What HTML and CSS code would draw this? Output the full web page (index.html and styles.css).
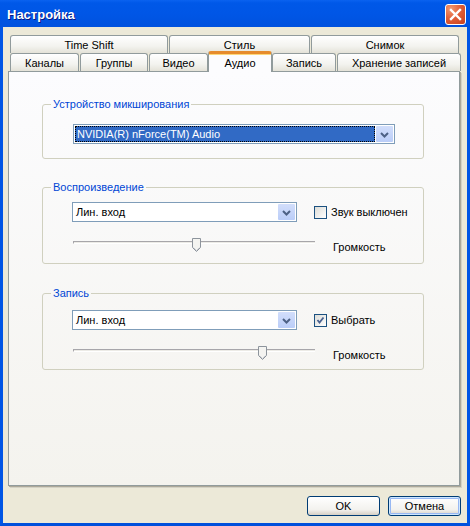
FILE: index.html
```html
<!DOCTYPE html>
<html lang="ru">

<head>
    <meta charset="UTF-8">
    <title>Настройка</title>
    <link rel="stylesheet" href="styles.css">
</head>

<body>
    <div class="window">
        <div class="titlebar">
            <span class="title">Настройка</span>
            <div class="close">
                <svg width="19" height="19" viewBox="0 0 19 19">
                    <path d="M5 5 L14 14 M14 5 L5 14" stroke="#fff" stroke-width="2.4" stroke-linecap="square" />
                </svg>
            </div>
        </div>

        <div class="client">
            <div class="tabs">
                <div class="tabrow">
                    <div class="tab" style="width: 158px">Time Shift</div>
                    <div class="tab" style="width: 141px">Стиль</div>
                    <div class="tab" style="width: 148px">Снимок</div>
                </div>
                <div class="tabrow front">
                    <div class="tab" style="width: 69px">Каналы</div>
                    <div class="tab" style="width: 68px">Группы</div>
                    <div class="tab" style="width: 59px">Видео</div>
                    <div class="tab active" style="width: 64px">Аудио</div>
                    <div class="tab" style="width: 64px">Запись</div>
                    <div class="tab" style="width: 124px">Хранение записей</div>
                </div>
            </div>

            <div class="pane">
                <fieldset class="group group-mixer">
                    <legend>Устройство микширования</legend>
                    <div class="combo wide">
                        <div class="combo-value selected"><span>NVIDIA(R) nForce(TM) Audio</span></div>
                        <div class="combo-btn">
                            <svg width="17" height="17" viewBox="0 0 17 17">
                                <path d="M5 7 L8.5 10.5 L12 7" fill="none" stroke="#4d6185" stroke-width="2" />
                            </svg>
                        </div>
                    </div>
                </fieldset>

                <fieldset class="group group-play">
                    <legend>Воспроизведение</legend>
                    <div class="row">
                        <div class="combo">
                            <div class="combo-value">Лин. вход</div>
                            <div class="combo-btn">
                                <svg width="17" height="17" viewBox="0 0 17 17">
                                    <path d="M5 7 L8.5 10.5 L12 7" fill="none" stroke="#4d6185" stroke-width="2" />
                                </svg>
                            </div>
                        </div>
                        <label class="check">
                            <span class="box"></span>
                            Звук выключен
                        </label>
                    </div>
                    <div class="row slider-row">
                        <div class="slider">
                            <div class="track"></div>
                            <div class="thumb" style="left: 119px">
                                <svg width="9" height="14" viewBox="0 0 9 14">
                                    <path d="M0.5 0.5 H8.5 V9.5 L4.5 13.5 L0.5 9.5 Z" fill="#f4f4f1" stroke="#8d949c" />
                                    <path d="M1.5 9.5 L4.5 12.5 L7.5 9.5" fill="none" stroke="#c9ccd1" />
                                </svg>
                            </div>
                        </div>
                        <span class="slider-label">Громкость</span>
                    </div>
                </fieldset>

                <fieldset class="group group-rec">
                    <legend>Запись</legend>
                    <div class="row">
                        <div class="combo">
                            <div class="combo-value">Лин. вход</div>
                            <div class="combo-btn">
                                <svg width="17" height="17" viewBox="0 0 17 17">
                                    <path d="M5 7 L8.5 10.5 L12 7" fill="none" stroke="#4d6185" stroke-width="2" />
                                </svg>
                            </div>
                        </div>
                        <label class="check">
                            <span class="box">
                                <svg width="11" height="11" viewBox="0 0 11 11">
                                    <path d="M2.5 5 L4.5 7.5 L8.5 2.5" fill="none" stroke="#4a6290" stroke-width="1.8" />
                                </svg>
                            </span>
                            Выбрать
                        </label>
                    </div>
                    <div class="row slider-row">
                        <div class="slider">
                            <div class="track"></div>
                            <div class="thumb" style="left: 185px">
                                <svg width="9" height="14" viewBox="0 0 9 14">
                                    <path d="M0.5 0.5 H8.5 V9.5 L4.5 13.5 L0.5 9.5 Z" fill="#f4f4f1" stroke="#8d949c" />
                                    <path d="M1.5 9.5 L4.5 12.5 L7.5 9.5" fill="none" stroke="#c9ccd1" />
                                </svg>
                            </div>
                        </div>
                        <span class="slider-label">Громкость</span>
                    </div>
                </fieldset>
            </div>

            <div class="buttons">
                <button class="btn">OK</button>
                <button class="btn default">Отмена</button>
            </div>
        </div>
    </div>
</body>

</html>
```

FILE: styles.css
```css
* {
    box-sizing: border-box;
}

body {
    margin: 0;
    font-family: "Liberation Sans", Arial, sans-serif;
    font-size: 11px;
    color: #000;
    background-color: #ece9d8;
}

.window {
    width: 470px;
    height: 526px;
    display: flex;
    flex-direction: column;
    background-color: #0054e3;
    border-left: 3px solid #0055e5;
    border-right: 3px solid #0055e5;
    border-bottom: 3px solid #0050dc;
}

.titlebar {
    height: 27px;
    margin: 0 -3px;
    padding: 0 4px 0 7px;
    display: flex;
    align-items: center;
    justify-content: space-between;
    background: linear-gradient(#0a62f0 0, #0058e8 3px, #0056e6 50%, #0052de 100%);
}

.title {
    color: #fff;
    font-size: 13px;
    font-weight: bold;
    text-shadow: 1px 1px 0 #0a1883;
    padding-top: 2px;
}

.close {
    width: 21px;
    height: 21px;
    margin-top: 1px;
    border: 1px solid #fff;
    border-radius: 3px;
    display: flex;
    align-items: center;
    justify-content: center;
    background: radial-gradient(circle at 25% 20%, #f29a72 0, #e2603a 45%, #c7401d 100%);
}

.client {
    flex: 1;
    display: flex;
    flex-direction: column;
    background-color: #ece9d8;
    padding: 8px 0 0 5px;
}

/* tabs */
.tabs {
    padding-left: 2px;
}

.tabrow {
    display: flex;
    height: 18px;
    gap: 1px;
}

.tabrow.front {
    align-items: flex-end;
}

.tab {
    height: 18px;
    flex-shrink: 0;
    display: flex;
    align-items: center;
    justify-content: center;
    border: 1px solid #919b9c;
    border-bottom: none;
    border-radius: 3px 3px 0 0;
    background: linear-gradient(#ffffff, #f3f3ef 60%, #e4e2d8);
    padding-top: 1px;
}

.tab.active {
    height: 21px;
    margin-bottom: -1px;
    margin-left: -1px;
    margin-right: -1px;
    position: relative;
    z-index: 1;
    background: #fcfcfe;
    border-top: 3px solid #e68b2c;
    box-shadow: inset 0 1px 0 #fdd77a;
    padding-bottom: 2px;
}

.pane {
    width: 452px;
    height: 415px;
    border: 1px solid #919b9c;
    background: linear-gradient(#fcfcfe, #f4f3ee);
    box-shadow: 1px 1px 0 #aca899, 2px 2px 0 #d4d2c5;
    padding: 25px 0 0 33px;
}

/* group boxes */
.group {
    width: 382px;
    margin: 0;
    border: 1px solid #d0d0bf;
    border-radius: 3px;
    padding: 0 0 0 29px;
    min-width: 0;
}

.group legend {
    color: #0046d5;
    line-height: 14px;
    padding: 0 2px;
    margin-left: -21px;
}

.group-mixer {
    padding-top: 13px;
    padding-bottom: 14px;
}

.group-play {
    margin-top: 21px;
    padding-top: 8px;
    padding-bottom: 10px;
}

.group-rec {
    margin-top: 22px;
    padding-top: 10px;
    padding-bottom: 8px;
}

.row {
    display: flex;
    align-items: center;
}

.slider-row {
    margin-top: 13px;
    height: 18px;
    align-items: flex-start;
}

/* combo box */
.combo {
    width: 225px;
    height: 20px;
    border: 1px solid #7f9db9;
    background-color: #fff;
    display: flex;
    align-items: center;
    padding: 1px;
}

.combo.wide {
    width: 322px;
    margin-left: 1px;
}

.combo-value {
    flex: 1;
    padding-left: 2px;
    line-height: 16px;
}

.combo-value.selected {
    height: 16px;
    margin-right: 1px;
    padding: 0;
    background-color: #316ac5;
    color: #fff;
    outline: 1px dotted #000;
    outline-offset: -1px;
    display: flex;
    align-items: center;
}

.combo-value.selected span {
    padding-left: 2px;
}

.combo-btn {
    width: 17px;
    height: 16px;
    border-radius: 1px;
    background: linear-gradient(#d2defb, #bacdf8);
    display: flex;
    align-items: center;
    justify-content: center;
}

/* checkbox */
.check {
    display: flex;
    align-items: center;
    gap: 4px;
    margin-left: 17px;
}

.box {
    width: 13px;
    height: 13px;
    border: 1px solid #1c5180;
    background: linear-gradient(135deg, #dcdcd7, #ffffff);
    display: flex;
    align-items: center;
    justify-content: center;
}

/* slider */
.slider {
    width: 242px;
    height: 18px;
    margin-left: 1px;
    position: relative;
}

.track {
    margin-top: 6px;
    height: 3px;
    border-top: 1px solid #a7a6aa;
    border-bottom: 1px solid #ffffff;
    border-left: 1px solid #a7a6aa;
    background-color: #ecebe6;
}

.thumb {
    position: absolute;
    top: 3px;
    height: 14px;
}

.thumb svg {
    display: block;
}

.slider-label {
    margin-left: 18px;
    margin-top: 6px;
}

/* bottom buttons */
.buttons {
    display: flex;
    justify-content: flex-end;
    gap: 8px;
    padding: 10px 6px 0 0;
}

.btn {
    width: 73px;
    height: 20px;
    font-family: inherit;
    font-size: 11px;
    color: #000;
    border: 1px solid #003c74;
    border-radius: 3px;
    background: linear-gradient(#ffffff, #f3f2ee 70%, #d6d0c5);
    padding: 0;
}

.btn.default {
    box-shadow: inset 0 0 0 1px #cee7ff, inset 0 0 0 2px #98b8f3;
}
```
